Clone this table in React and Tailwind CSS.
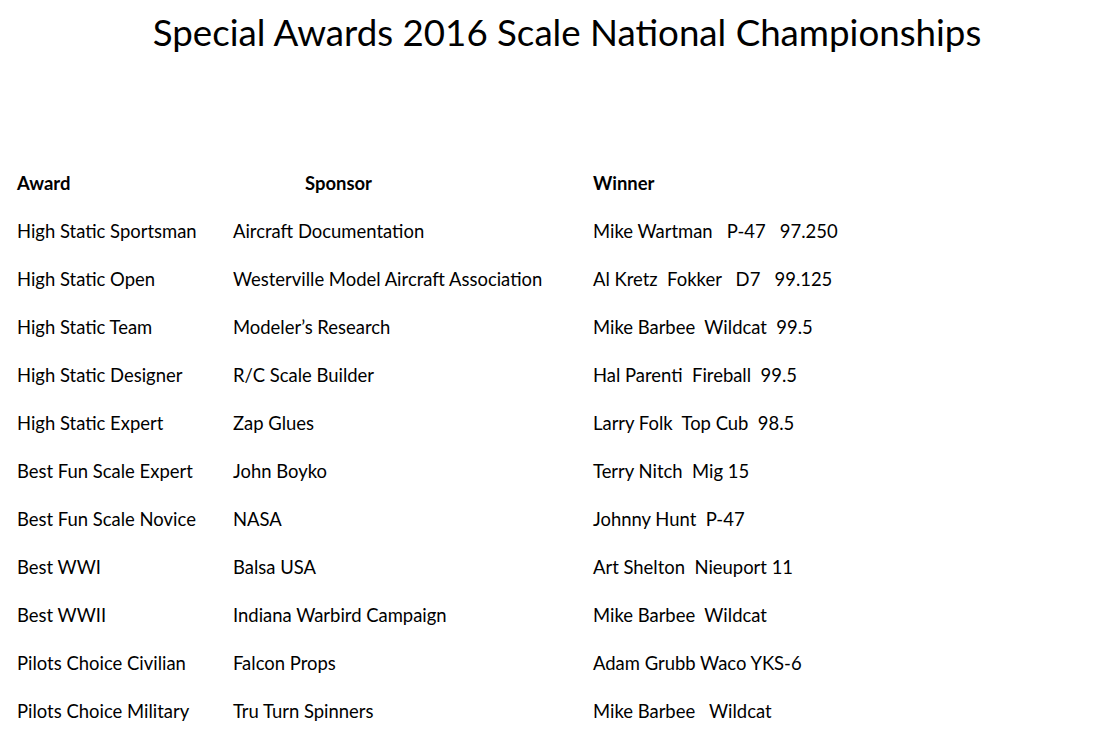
const rows = [
  ['High Static Sportsman', 'Aircraft Documentation', 'Mike Wartman   P-47   97.250'],
  ['High Static Open', 'Westerville Model Aircraft Association', 'Al Kretz  Fokker   D7   99.125'],
  ['High Static Team', 'Modeler\u2019s Research', 'Mike Barbee  Wildcat  99.5'],
  ['High Static Designer', 'R/C Scale Builder', 'Hal Parenti  Fireball  99.5'],
  ['High Static Expert', 'Zap Glues', 'Larry Folk  Top Cub  98.5'],
  ['Best Fun Scale Expert', 'John Boyko', 'Terry Nitch  Mig 15'],
  ['Best Fun Scale Novice', 'NASA', 'Johnny Hunt  P-47'],
  ['Best WWI', 'Balsa USA', 'Art Shelton  Nieuport 11'],
  ['Best WWII', 'Indiana Warbird Campaign', 'Mike Barbee  Wildcat'],
  ['Pilots Choice Civilian', 'Falcon Props', 'Adam Grubb Waco YKS-6'],
  ['Pilots Choice Military', 'Tru Turn Spinners', 'Mike Barbee   Wildcat'],
];

export default function App() {
  return (
    <div className="w-[1110px] h-[741px] bg-white text-black overflow-hidden font-['Lato','Liberation_Sans',sans-serif]">
      <h1 className="pt-[10px] text-center text-[36.7px] leading-[44px] pl-[24px]">Special Awards 2016 Scale National Championships</h1>

      <div className="mt-[116px] pl-[17px] text-[18.45px] whitespace-pre">
        <div className="grid grid-cols-[216px_360px_1fr] h-[48px] font-bold">
          <div>Award</div>
          <div className="pl-[72px]">Sponsor</div>
          <div>Winner</div>
        </div>
        {rows.map(([award, sponsor, winner]) => (
          <div key={award} className="grid grid-cols-[216px_360px_1fr] h-[48px]">
            <div>{award}</div>
            <div>{sponsor}</div>
            <div>{winner}</div>
          </div>
        ))}
      </div>
    </div>
  );
}
